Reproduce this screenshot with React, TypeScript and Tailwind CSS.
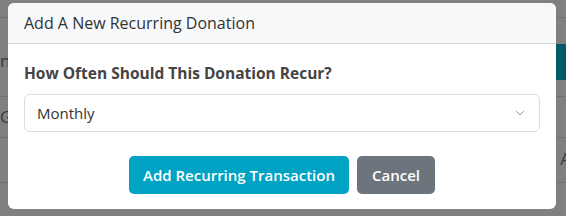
import React from "react";

export default function App() {
  return (
    <div
      className="relative w-[566px] h-[216px] overflow-hidden bg-[#808080]"
      style={{ fontFamily: "'Open Sans', 'Noto Sans', sans-serif" }}
    >
      {/* faint underlying page */}
      <div className="flex flex-col w-full h-full text-[#3a3a3a]">
        <div className="h-[18px] border-b border-[#707070]" />
        <div className="flex h-[79px] border-b border-[#707070]">
          <div className="flex-1 pt-[34px] text-[17px] leading-none">n</div>
          <div className="w-[10px] mt-[26px] h-[36px] bg-[#005a66]" />
        </div>
        <div className="h-[41px] border-b border-[#707070] pt-[11px] text-[17px] leading-none">Ge</div>
        <div className="h-[45px] border-b border-[#707070] flex justify-end pt-[12px] text-[17px] leading-none">
          <span className="mr-[-5px]">A</span>
        </div>
        <div className="pl-[10px] text-[16px] leading-none pt-[4px]">f</div>
      </div>

      {/* modal */}
      <div className="absolute left-[8px] top-[3px] w-[548px] h-[206px] bg-white rounded-[6px] overflow-hidden flex flex-col">
        <div className="h-[41px] bg-[#f7f8fa] border-b border-[#d4d6da] flex items-center px-[16px] text-[16px] text-[#333]">
          Add A New Recurring Donation
        </div>
        <div className="flex flex-col px-[16px] pt-[19px]">
          <div className="text-[15.5px] font-bold text-[#444] leading-[20px]">
            How Often Should This Donation Recur?
          </div>
          <div className="mt-[11px] h-[38px] border border-[#dcdde2] rounded-[6px] flex items-center justify-between pl-[12px] pr-[14px] text-[15px] text-[#333]">
            <span>Monthly</span>
            <svg width="10" height="6" viewBox="0 0 10 6" fill="none">
              <path d="M1 1l4 4 4-4" stroke="#9a9a9a" strokeWidth="1" />
            </svg>
          </div>
          <div className="flex justify-center gap-[8px] mt-[24px]">
            <button className="h-[38px] px-[14px] rounded-[5px] bg-[#00a3c4] text-white text-[15px] font-semibold">
              Add Recurring Transaction
            </button>
            <button className="h-[38px] px-[15px] rounded-[5px] bg-[#6c757d] text-white text-[15px] font-semibold">
              Cancel
            </button>
          </div>
        </div>
      </div>
    </div>
  );
}
